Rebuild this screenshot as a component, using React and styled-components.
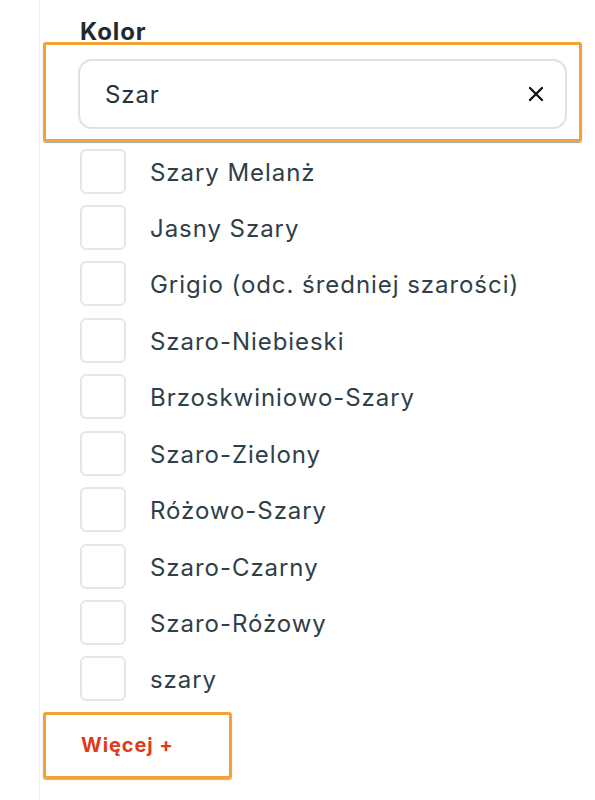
import React from "react";
import styled, { createGlobalStyle } from "styled-components";

const Global = createGlobalStyle`
  html, body { margin: 0; padding: 0; background: #ffffff; }
  body { font-family: Inter, "Noto Sans", Arial, sans-serif; }
  * { box-sizing: border-box; }
`;

const Panel = styled.div`
  margin-left: 39px;
  border-left: 1.5px solid #efefef;
  min-height: 800px;
  padding-top: 21px;
`;

const Title = styled.h3`
  margin: 0 0 0 40px;
  font-size: 24px;
  line-height: 21px;
  font-weight: 700;
  color: #1f2b30;
  letter-spacing: 0.9px;
`;

const Highlight = styled.div`
  margin-left: 3px;
  width: 539px;
  height: 100px;
  border: 3px solid #f4a236;
  border-radius: 3px;
  padding: 14px 12px 10px 32px;
  box-shadow: 0 1px 1px rgba(0, 0, 0, 0.35);
`;

const SearchBox = styled.div`
  height: 70px;
  border: 2.5px solid #e1e1e1;
  border-radius: 14px;
  display: flex;
  align-items: center;
  padding: 0 20px 0 25px;
`;

const SearchText = styled.span`
  flex: 1;
  font-size: 24px;
  color: #23343b;
  letter-spacing: 0.9px;
`;

const ClearButton = styled.span`
  display: flex;
  width: 18px;
  height: 18px;
  align-items: center;
  justify-content: center;
`;

const List = styled.div`
  margin: 6.5px 0 0 40px;
  display: flex;
  flex-direction: column;
  gap: 11.44px;
`;

const Row = styled.label`
  display: flex;
  align-items: center;
  gap: 24px;
  height: 45px;
`;

const Box = styled.span`
  width: 46px;
  height: 45px;
  border: 2px solid #e6e6e6;
  border-radius: 6px;
  flex: none;
`;

const Label = styled.span`
  font-size: 24px;
  color: #2f4047;
  letter-spacing: 0.95px;
  padding-top: 2px;
`;

const MoreButton = styled.div`
  margin: 10.5px 0 0 3px;
  width: 189px;
  height: 67px;
  border: 3px solid #f4a236;
  border-radius: 3px;
  box-shadow: 0 1px 1px rgba(0, 0, 0, 0.3);
  display: flex;
  align-items: center;
  padding-left: 35px;
  font-size: 20px;
  font-weight: 700;
  color: #dc3c1c;
  letter-spacing: 0.9px;
`;

const items = [
  "Szary Melanż",
  "Jasny Szary",
  "Grigio (odc. średniej szarości)",
  "Szaro-Niebieski",
  "Brzoskwiniowo-Szary",
  "Szaro-Zielony",
  "Różowo-Szary",
  "Szaro-Czarny",
  "Szaro-Różowy",
  "szary",
];

export default function App() {
  return (
    <>
      <Global />
      <Panel>
        <Title>Kolor</Title>
        <Highlight>
          <SearchBox>
            <SearchText>Szar</SearchText>
            <ClearButton>
              <svg width="16" height="16" viewBox="0 0 16 16">
                <path d="M2 2 L14 14 M14 2 L2 14" stroke="#111" strokeWidth="2.3" strokeLinecap="round" />
              </svg>
            </ClearButton>
          </SearchBox>
        </Highlight>
        <List>
          {items.map((t) => (
            <Row key={t}>
              <Box />
              <Label>{t}</Label>
            </Row>
          ))}
        </List>
        <MoreButton>Więcej +</MoreButton>
      </Panel>
    </>
  );
}
